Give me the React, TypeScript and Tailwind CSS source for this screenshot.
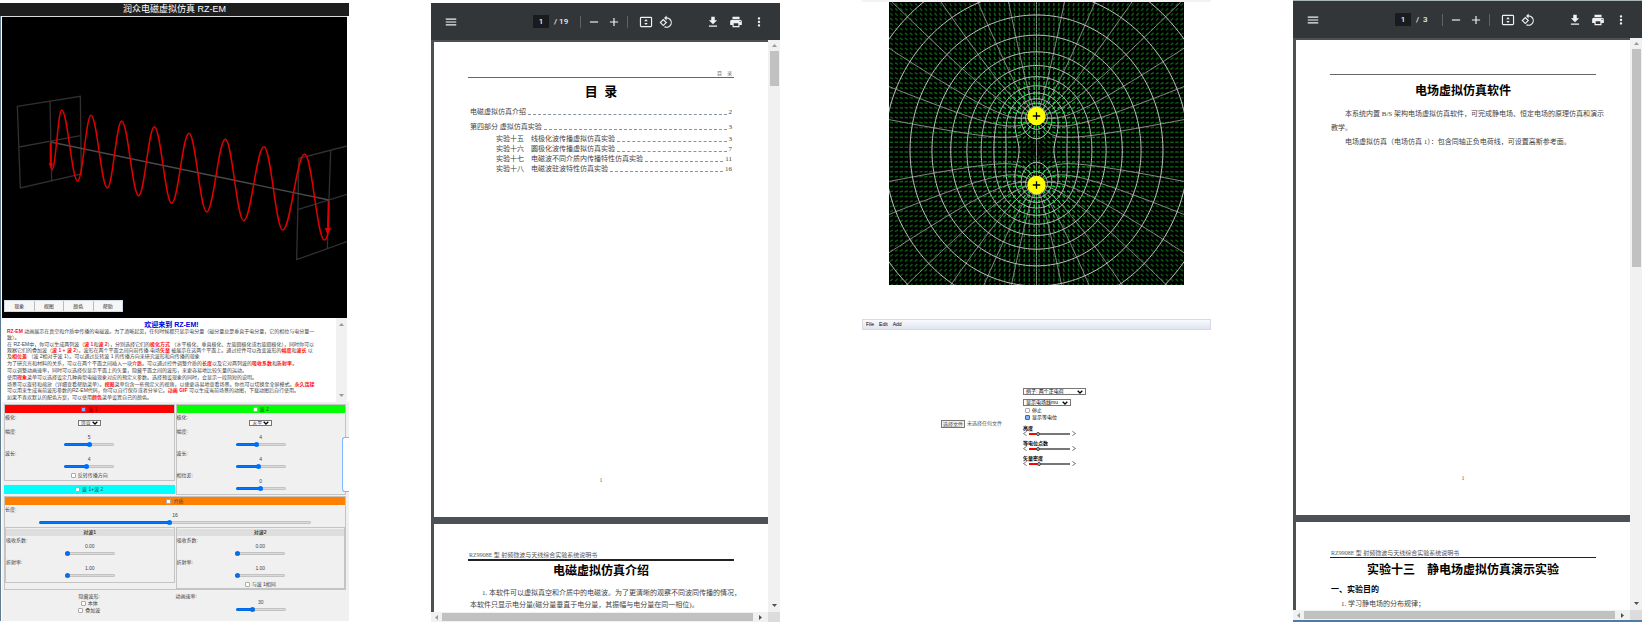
import { Fragment, useId } from "react";
import type { ReactNode } from "react";
import clsx from "clsx";
import {
  MdAdd,
  MdMenu,
  MdMoreVert,
  MdPrint,
  MdRemove,
  MdRotate90DegreesCcw,
} from "react-icons/md";

type Segment = string | { mark: string };

const introLines: Segment[][][] = [
  [
    [{ mark: "RZ-EM" }, " 动画展示在真空和介质中传播的电磁波。为了清晰起见，任何时候都只显示电分量（磁分量总是垂直于电分量，它的相位与电分量一"],
    ["致）。"],
  ],
  [
    ["在 RZ-EM中，你可以生成两列波（", { mark: "波 1" }, "和", { mark: "波 2" }, "），分别选择它们的", { mark: "极化方式" }, " （水平极化、垂直极化、左旋圆极化或右旋圆极化），同时你可以"],
    ["观察它们的叠加波（", { mark: "波 1 + 波 2" }, "）。波形在两个平面之间向前传播.电场", { mark: "矢量" }, " 被展示在这两个平面上。通过控件可以改变波形的", { mark: "幅度" }, "和", { mark: "波长" }, " 以"],
    ["及", { mark: "相位差" }, " （波 2相对于波 1）。可以通过反转波 1 的传播方向来研究波形和向传播的现象"],
  ],
  [
    ["为了研究光和材料的关系，可以在两个平面之间插入一块", { mark: "介质" }, "。可以通过控件调整介质的", { mark: "长度" }, "以及它对两列波的", { mark: "吸收系数" }, "和", { mark: "折射率" }, "。"],
  ],
  [["可以调整动画速率，同时可以选择仅显示平面上的矢量，隐藏平面之间的波形，来更容易地比较矢量的运动。"]],
  [["使用", { mark: "现象" }, "菜单可以选择设定几种典型电磁现象对应的预定义参数。选择预设现象的同时，会显示一段简短的说明。"]],
  [
    ["场景可以旋转和缩放（详细查看帮助菜单）。", { mark: "视图" }, "菜单包含一些预定义的视角，以便更容易地查看场景。你也可以切换至全屏模式。", { mark: "永久连接" }],
    ["可以用来生成当前波形参数的RZ-EM代码，你可以自行保存或者分享它。", { mark: "动画 GIF" }, " 可以生成当前场景的动图，下载动图后自行使用。"],
  ],
  [["如果不喜欢默认的配色方案，可以使用", { mark: "颜色" }, "菜单设置自己的颜色。"]],
];

/* Turning points of the travelling wave, from the left plane to the right one. */
const wavePoints = [
  [156, 510], [185, 330], [233, 543], [273, 346], [322, 564], [365, 363],
  [416, 587], [463, 380], [515, 610], [567, 400], [620, 636], [676, 418],
  [731, 662], [792, 440], [848, 690], [914, 462], [973, 720],
];

function wavePath() {
  let d = `M${wavePoints[0][0]} ${wavePoints[0][1]}`;
  for (let i = 1; i < wavePoints.length; i++) {
    const [x0, y0] = wavePoints[i - 1];
    const [x1, y1] = wavePoints[i];
    const k = (x1 - x0) * 0.37;
    d += `C${x0 + k} ${y0} ${x1 - k} ${y1} ${x1} ${y1}`;
  }
  return `${d}Q980 720 984 698`;
}

function WaveScene() {
  return (
    <svg viewBox="6 51 1035 903" className="block w-full bg-black" fill="none">
      <g stroke="#303030" strokeWidth="4">
        <path d="M52 319L241 289L244 522L61 564ZM150 304L155 543M57 441L242 407" />
        <path d="M1041 438L897 475L890 779L1041 725M893 629L1041 583M992 453L982 745" />
        <path d="M152 426L987 600" stroke="#4a4a4a" />
      </g>
      <path d={wavePath()} stroke="#e00000" strokeWidth="4.5" />
      <path d="M152 428V494M986 603L984 688" stroke="#e00000" strokeWidth="6" />
      <path d="M146 490H159L154 510ZM974 684H993L983 704Z" fill="#e00000" />
    </svg>
  );
}

type SliderProps = {
  label: string;
  value: string;
  percent: number;
  wide?: boolean;
};

function Slider({ label, value, percent, wide }: SliderProps) {
  const id = useId();

  return (
    <div className="flex h-[22px] flex-col">
      <label htmlFor={id} className="leading-[6px]">
        {label}:
      </label>
      <output htmlFor={id} className="text-center leading-[6px]">
        {value}
      </output>
      <div className="flex h-2 items-center justify-center">
        <input
          id={id}
          type="range"
          min={0}
          max={100}
          defaultValue={percent}
          className={clsx(
            "h-[3px] appearance-none rounded-full bg-[#dadada] outline-1 -outline-offset-1 outline-black/10 [&::-webkit-slider-thumb]:size-[5px] [&::-webkit-slider-thumb]:appearance-none [&::-webkit-slider-thumb]:rounded-full [&::-webkit-slider-thumb]:bg-[#0075ff]",
            wide ? "w-4/5" : "w-[50px]",
          )}
          style={{
            backgroundImage: `linear-gradient(to right, #0075ff ${percent}%, transparent ${percent}%)`,
          }}
        />
      </div>
    </div>
  );
}

function Check({ label, checked }: { label: string; checked?: boolean }) {
  return (
    <label className="flex items-center justify-center gap-[2px]">
      <input
        type="checkbox"
        defaultChecked={checked}
        className="size-[5px] shrink-0 appearance-none rounded-[1px] border border-[#aaa] bg-white checked:border-[#0075ff] checked:bg-[#7ab6ff]"
      />
      {label}
    </label>
  );
}

function Select({ label, options, className }: { label: string; options: string[]; className?: string }) {
  return (
    <div className={clsx("relative", className)}>
      <select
        aria-label={label}
        className="block h-full w-full appearance-none border border-[#777] bg-white pl-[2px] leading-none"
      >
        {options.map((option) => (
          <option key={option}>{option}</option>
        ))}
      </select>
      <svg
        viewBox="0 0 6 4"
        className="pointer-events-none absolute inset-y-0 right-[3px] my-auto w-[6px]"
        fill="none"
        stroke="#000"
        strokeWidth="1.3"
      >
        <path d="M.7 .7L3 3L5.3 .7" />
      </svg>
    </div>
  );
}

function Polarisation({ value }: { value: string }) {
  return (
    <div className="flex h-[14px] flex-col">
      <span className="leading-[6px]">极化:</span>
      <Select label="极化" options={[value]} className="mx-auto h-[6px] w-[23px]" />
    </div>
  );
}

function Bar({ className, children }: { className: string; children: ReactNode }) {
  return <div className={clsx("flex items-center justify-center leading-none", className)}>{children}</div>;
}

function WavePanel() {
  return (
    <section className="relative bg-[#f0f0f0] pt-[2px] pr-[3px] pb-[6px] pl-[2px] text-[5px] text-[#444]">
      <div className="grid grid-cols-2 items-start gap-x-px">
        <div>
          <div className="border border-[#c4c4c4] pb-[2px]">
            <Bar className="mb-px h-2 bg-[#ff0000] text-[#5a0000]">
              <Check label="波 1" checked />
            </Bar>
            <Polarisation value="竖直" />
            <Slider label="幅度" value="5" percent={50} />
            <Slider label="波长" value="4" percent={44} />
            <div className="leading-[6px]">
              <Check label="反转传播方向" />
            </div>
          </div>
          <Bar className="mt-[4px] h-[9px] bg-[#00ffff]">
            <Check label="波 1+波 2" />
          </Bar>
        </div>
        <div className="h-[91px] border border-[#c4c4c4]">
          <Bar className="mb-px h-2 bg-[#00ff00] text-[#005a00]">
            <Check label="波 2" />
          </Bar>
          <Polarisation value="水平" />
          <Slider label="幅度" value="4" percent={41} />
          <Slider label="波长" value="4" percent={44} />
          <Slider label="相位差" value="0" percent={50} />
        </div>
      </div>

      <div className="mt-px border border-[#c4c4c4]">
        <Bar className="mb-px h-2 bg-[#ff8000]">
          <Check label="介质" />
        </Bar>
        <Slider label="长度" value="16" percent={48} wide />
        <div className="-mt-px grid grid-cols-2 items-start gap-x-px">
          {["对波1", "对波2"].map((title, index) => (
            <div key={title} className="border border-[#c4c4c4] pt-px pb-px">
              <Bar className="mb-px h-[7px] bg-[#dedede] font-bold">{title}</Bar>
              <Slider label="吸收系数" value="0.00" percent={0} />
              <Slider label="折射率" value="1.00" percent={0} />
              {index === 1 && (
                <div className="leading-[6px]">
                  <Check label="与波 1相同" />
                </div>
              )}
            </div>
          ))}
        </div>
      </div>

      <div className="mt-[3px] grid grid-cols-2 gap-x-px">
        <fieldset className="text-center leading-[7px]">
          <div>隐藏波形:</div>
          <Check label="本体" />
          <Check label="叠加波" />
        </fieldset>
        <Slider label="动画速率" value="30" percent={32} />
      </div>

      <div className="absolute top-[35px] right-0 h-[55px] w-[7px] rounded-l-[3px] border border-r-0 border-[#7fb8ff] bg-white" />
    </section>
  );
}

function WaveSimulator() {
  return (
    <section className="pt-[3px] font-['Liberation_Sans','Noto_Sans_CJK_SC',sans-serif]">
      <h1 className="h-[13px] bg-[#1e1e1e] text-center text-[9px] leading-[13px] text-white">
        润众电磁虚拟仿真 RZ-EM
      </h1>
      <div className="border-l border-[#5f7d92] pl-px">
        <div className="relative mr-[2px] border-t border-[#ddd]">
          <WaveScene />
          <nav className="absolute bottom-[6px] left-[2px] flex w-[119px] divide-x divide-[#bbb] border border-[#cfdbe6] bg-[#f6f6f6] text-[5px] text-[#333]">
            {["现象", "视图", "颜色", "帮助"].map((item) => (
              <button key={item} type="button" className="h-[10px] flex-1 leading-none">
                {item}
              </button>
            ))}
          </nav>
        </div>
        <div className="mr-[2px] flex h-[84px] overflow-hidden">
          <div className="min-w-0 flex-1 overflow-hidden pt-[3px] pl-[5px] whitespace-nowrap">
            <h2 className="text-center text-[7px] leading-[7px] font-bold text-[#0000e0]">欢迎来到 RZ-EM!</h2>
            <div className="flex flex-col gap-px text-[5px] leading-[6px] text-[#444]">
              {introLines.map((lines, index) => (
                <p key={index}>
                  {lines.map((segments, row) => (
                    <Fragment key={row}>
                      {row > 0 && <br />}
                      {segments.map((segment, part) =>
                        typeof segment === "string" ? (
                          segment
                        ) : (
                          <b key={part} className="text-[#ff1010]">
                            {segment.mark}
                          </b>
                        ),
                      )}
                    </Fragment>
                  ))}
                </p>
              ))}
            </div>
          </div>
          <div className="flex w-[11px] flex-col items-center justify-between bg-[#f1f1f1] py-1 text-[#999]">
            <Arrow direction="up" />
            <Arrow direction="down" />
          </div>
        </div>
        <WavePanel />
      </div>
    </section>
  );
}

function Arrow({ direction }: { direction: "up" | "down" | "left" | "right" }) {
  const shapes = {
    up: "M0 4L2.5 1L5 4Z",
    down: "M0 1L2.5 4L5 1Z",
    left: "M4 0L1 2.5L4 5Z",
    right: "M1 0L4 2.5L1 5Z",
  };

  return (
    <svg viewBox="0 0 5 5" className="size-[5px] shrink-0" fill="currentColor">
      <path d={shapes[direction]} />
    </svg>
  );
}

function PdfToolbar({ pages }: { pages: number }) {
  const iconButton = "size-[14px] shrink-0";

  return (
    <header className="flex h-[37px] items-center bg-[#323639] pr-[14px] pl-[13px] font-[Roboto,sans-serif] text-[8px] text-[#f1f1f1]">
      <button type="button" aria-label="菜单" className={iconButton}>
        <MdMenu className="size-full" stroke="currentColor" />
      </button>
      <input
        aria-label="页码"
        defaultValue="1"
        className="ml-[75px] h-[13px] w-4 bg-[#191b1c] text-center font-medium"
      />
      <span className="w-[26px] pl-[5px] font-medium whitespace-pre">{pages < 10 ? `/  ${pages}` : `/ ${pages}`}</span>
      <span className="ml-[5px] h-3 w-px bg-[#5f6366]" />
      <button type="button" aria-label="缩小" className={clsx(iconButton, "ml-[6px]")}>
        <MdRemove className="size-full" stroke="currentColor" />
      </button>
      <button type="button" aria-label="放大" className={clsx(iconButton, "ml-[6px]")}>
        <MdAdd className="size-full" stroke="currentColor" />
      </button>
      <span className="ml-[6px] h-3 w-px bg-[#5f6366]" />
      <button type="button" aria-label="适合页面" className={clsx(iconButton, "ml-[11px]")}>
        <svg viewBox="0 0 24 24" className="size-full" fill="none" stroke="currentColor" strokeWidth="2">
          <rect x="2.5" y="4" width="19" height="16" rx="1.5" />
          <path d="M9 10.5L12 7L15 10.5ZM9 13.5L12 17L15 13.5Z" fill="currentColor" stroke="none" />
        </svg>
      </button>
      <button type="button" aria-label="旋转" className={clsx(iconButton, "ml-[6px]")}>
        <MdRotate90DegreesCcw className="size-full" />
      </button>
      <div className="ml-auto flex gap-[9px]">
        <button type="button" aria-label="下载" className={iconButton}>
          <svg viewBox="0 0 24 24" className="size-full" fill="currentColor">
            <path d="M19 9h-4V3H9v6H5l7 7 7-7zM5 18v2h14v-2H5z" />
          </svg>
        </button>
        <button type="button" aria-label="打印" className={iconButton}>
          <MdPrint className="size-full" />
        </button>
        <button type="button" aria-label="更多" className={iconButton}>
          <MdMoreVert className="size-full" />
        </button>
      </div>
    </header>
  );
}

type PdfViewerProps = {
  pages: number;
  thumbClass: string;
  first: ReactNode;
  second: ReactNode;
};

function PdfViewer({ pages, thumbClass, first, second }: PdfViewerProps) {
  return (
    <section className="font-['Liberation_Serif','Noto_Sans_CJK_SC',serif]">
      <PdfToolbar pages={pages} />
      <div className="flex bg-[#4c5154]">
        <div className="flex min-w-0 flex-1 flex-col gap-[7px] pt-[2px] pl-[3px]">
          <article className="flex h-[475px] flex-col overflow-hidden bg-white px-[34px] whitespace-nowrap">
            {first}
            <div className="mt-auto pb-8 text-center text-[6px] leading-[10px] text-[#7a5a48]">1</div>
          </article>
          <article className="h-[88px] overflow-hidden bg-white px-[34px] whitespace-nowrap">
            {second}
          </article>
        </div>
        <div className="flex w-3 flex-col items-center bg-[#f1f1f1] text-[#505050]">
          <div className="flex h-[11px] items-center text-[#999]">
            <Arrow direction="up" />
          </div>
          <div className={clsx("w-[9px] bg-[#c1c1c1]", thumbClass)} />
          <div className="mt-auto pb-1">
            <Arrow direction="down" />
          </div>
        </div>
      </div>
      <div className="flex h-[10px] items-center bg-[#f1f1f1] text-[#505050]">
        <div className="flex w-[11px] justify-center text-[#999]">
          <Arrow direction="left" />
        </div>
        <div className="h-2 flex-1 bg-[#c1c1c1]" />
        <div className="flex w-[15px] justify-center">
          <Arrow direction="right" />
        </div>
        <div className="h-full w-3 bg-[#dcdcdc]" />
      </div>
    </section>
  );
}

const chapters = [
  { title: "电磁虚拟仿真介绍", page: 2 },
  { title: "第四部分 虚拟仿真实验", page: 3 },
];

const experiments = [
  { title: "实验十五　线极化波传播虚拟仿真实验", page: 3 },
  { title: "实验十六　圆极化波传播虚拟仿真实验", page: 7 },
  { title: "实验十七　电磁波不同介质内传播特性仿真实验", page: 11 },
  { title: "实验十八　电磁波驻波特性仿真实验", page: 16 },
];

function ContentsRow({ title, page }: { title: string; page: number }) {
  return (
    <li className="flex items-center">
      {title}
      <span className="mx-[2px] mt-1 flex-1 border-b border-dashed border-[#8a93a3]" />
      {page}
    </li>
  );
}

function ContentsPage() {
  return (
    <>
      <div className="pt-7 pr-[2px] text-right text-[5px] leading-[7px] text-[#666]">目　录</div>
      <hr className="border-[#666]" />
      <h2 className="mt-[5px] text-center text-[13px] leading-[18px] font-bold whitespace-pre text-black">目  录</h2>
      <div className="mt-[6px] px-[2px] text-[7px] leading-[10px] text-[#444]">
        <ol className="flex flex-col gap-[5px]">
          {chapters.map((entry) => (
            <ContentsRow key={entry.title} {...entry} />
          ))}
        </ol>
        <ol className="mt-[2px] pl-[26px]">
          {experiments.map((entry) => (
            <ContentsRow key={entry.title} {...entry} />
          ))}
        </ol>
      </div>
    </>
  );
}

function RunningHead({ thick }: { thick?: boolean }) {
  return (
    <>
      <div className="pt-[27px] pl-px text-[6px] leading-[8px] text-[#555]">
        RZ9908E 型 射频微波与天线综合实验系统说明书
      </div>
      <hr className={clsx("border-[#222]", thick && "border-t-2")} />
    </>
  );
}

function IntroPage() {
  return (
    <>
      <RunningHead thick />
      <h2 className="mt-[2px] text-center text-[12px] leading-4 font-bold text-black">电磁虚拟仿真介绍</h2>
      <p className="mt-2 pl-[2px] text-[7px] leading-[12px] text-[#444]">
        <span className="pl-3">1. 本软件可以虚拟真空和介质中的电磁波。为了更清晰的观察不同波同传播的情况，</span>
        <br />
        本软件只显示电分量(磁分量垂直于电分量，其振幅与电分量在同一相位)。
      </p>
    </>
  );
}

function SoftwarePage() {
  return (
    <>
      <hr className="mt-[34px] border-[#666]" />
      <h2 className="mt-[7px] text-center text-[12px] leading-[18px] font-bold text-black">电场虚拟仿真软件</h2>
      <div className="mt-[7px] pl-px text-[7px] leading-[14px] text-[#444]">
        <p className="indent-[14px]">
          本系统内置 B/S 架构电场虚拟仿真软件，可完成静电场、恒定电场的原理仿真和演示
          <br />
          教学。
        </p>
        <p className="indent-[14px]">电场虚拟仿真（电场仿真 1）：包含同轴正负电荷线，可设置高斯参考面。</p>
      </div>
    </>
  );
}

function ExperimentPage() {
  return (
    <>
      <RunningHead />
      <h2 className="mt-1 text-center text-[12px] leading-4 font-bold text-black">
        实验十三　静电场虚拟仿真演示实验
      </h2>
      <h3 className="mt-[5px] pl-px text-[8px] leading-[14px] font-bold text-black">一、实验目的</h3>
      <p className="pl-[11px] text-[7px] leading-[14px] text-[#444]">1. 学习静电场的分布规律；</p>
    </>
  );
}

/* Two equal line charges at (0, ±A). With z measured along their axis,
   z² - A² = c·e^(iψ): constant c is an equipotential, constant ψ a field line. */
const A = 34.5;

function rootPoint(c: number, psi: number) {
  const re = A * A + c * Math.cos(psi);
  const im = c * Math.sin(psi);
  const r = Math.sqrt(Math.hypot(re, im));
  const t = Math.atan2(im, re) / 2;
  return [r * Math.cos(t), r * Math.sin(t)];
}

function mirroredPath(points: number[][]) {
  return [1, -1]
    .map((s) => "M" + points.map(([u, v]) => `${(s * v).toFixed(2)} ${(-s * u).toFixed(2)}`).join("L"))
    .join("");
}

const equipotentials = Array.from({ length: 14 }, (_, k) => {
  const c = 370 * Math.pow(1.4175, k);
  return mirroredPath(
    Array.from({ length: 121 }, (_, i) => rootPoint(c, -Math.PI + 0.0001 + (i / 120) * (2 * Math.PI - 0.0002))),
  );
});

const fieldLines = Array.from({ length: 16 }, (_, k) => {
  const psi = -Math.PI + (k * Math.PI) / 8;
  const limit = k === 0 ? A * A : 52000;
  return mirroredPath(
    Array.from({ length: 80 }, (_, i) => rootPoint(limit * Math.pow(i / 79, 2.5), psi)),
  );
});

const vectors = Array.from({ length: 60 * 58 }, (_, n) => {
  const x = -145 + (n % 60) * 4.92;
  const y = -146 + Math.floor(n / 60) * 4.92;
  const up = x * x + (y + A) * (y + A) + 0.1;
  const down = x * x + (y - A) * (y - A) + 0.1;
  const ex = x / up + x / down;
  const ey = (y + A) / up + (y - A) / down;
  const size = Math.hypot(ex, ey) || 1;
  const ux = (ex / size) * 1.7;
  const uy = (ey / size) * 1.7;
  const level = Math.min(1, 0.18 + size * 16) * Math.min(1, size * 110);
  return { x1: x - ux, y1: y - uy, x2: x + ux, y2: y + uy, level };
});

function FieldScene() {
  return (
    <svg viewBox="-147.5 -148.5 295 283" className="mx-auto block w-[295px] bg-black" fill="none">
      {vectors.map((v, i) => (
        <line
          key={i}
          x1={v.x1}
          y1={v.y1}
          x2={v.x2}
          y2={v.y2}
          stroke={`rgb(${Math.round(50 * v.level * (1 - v.level))} ${Math.round(235 * v.level)} ${Math.round(50 * v.level)})`}
          strokeWidth="1.5"
        />
      ))}
      <path d={fieldLines.join("")} stroke="#9a929a" strokeWidth="0.9" />
      <path d={equipotentials.join("")} stroke="#c0c0c0" strokeWidth="1" />
      {[-A, A].map((y) => (
        <g key={y}>
          <circle cy={y} r="9.2" fill="#ffff00" />
          <path d={`M-3.7 ${y}H3.7M0 ${y - 3.7}V${y + 3.7}`} stroke="#000" strokeWidth="1.3" />
        </g>
      ))}
    </svg>
  );
}

function FieldSlider({ label, percent }: { label: string; percent: number }) {
  const id = useId();

  return (
    <div className="mb-1">
      <label htmlFor={id} className="block leading-[6px] font-bold">
        {label}
      </label>
      <div className="flex h-[5px] items-center gap-[2px] text-[#444]">
        <button type="button" aria-label={`${label} -`}>
          <svg viewBox="0 0 4 5" className="h-[5px] w-1" fill="none" stroke="currentColor" strokeWidth="0.7">
            <path d="M3.7 .3L.5 2.5L3.7 4.7" />
          </svg>
        </button>
        <input
          id={id}
          type="range"
          defaultValue={percent}
          className="h-[2px] w-[41px] appearance-none bg-[#777] [&::-webkit-slider-thumb]:size-[4px] [&::-webkit-slider-thumb]:appearance-none [&::-webkit-slider-thumb]:rounded-full [&::-webkit-slider-thumb]:border [&::-webkit-slider-thumb]:border-[#444] [&::-webkit-slider-thumb]:bg-[#bbb]"
          style={{ backgroundImage: `linear-gradient(to right, #ff0000 ${percent}%, transparent ${percent}%)` }}
        />
        <button type="button" aria-label={`${label} +`}>
          <svg viewBox="0 0 4 5" className="h-[5px] w-1" fill="none" stroke="currentColor" strokeWidth="0.7">
            <path d="M.3 .3L3.5 2.5L.3 4.7" />
          </svg>
        </button>
      </div>
    </div>
  );
}

function FieldSimulator() {
  return (
    <section className="border-t-2 border-[#f3f3f3] font-['Liberation_Sans','Noto_Sans_CJK_SC',sans-serif] text-[5px] text-black">
      <FieldScene />
      <nav className="mt-[34px] flex h-[11px] items-center gap-[5px] border border-[#d5dae3] bg-linear-to-b from-[#f8faff] to-[#dfe4ef] px-[3px] leading-none">
        <button type="button">File</button>
        <button type="button">Edit</button>
        <button type="button">Add</button>
      </nav>
      <div className="flex pt-[58px] pl-[79px]">
        <label className="mt-8 flex h-2 w-[82px] items-center gap-[2px] whitespace-nowrap text-[#555]">
          <input type="file" className="sr-only" />
          <span className="border border-[#777] bg-[#efefef] px-px leading-[6px]">选择文件</span>
          未选择任何文件
        </label>
        <form>
          <Select label="例子" options={["例子: 两个正电荷"]} className="h-[7px] w-[63px]" />
          <Select label="显示" options={["显示电场线mu"]} className="mt-1 mb-px h-[7px] w-12" />
          <div className="flex flex-col items-start pl-[2px] leading-[7px]">
            <Check label="停止" />
            <Check label="显示等电位" checked />
          </div>
          <div className="mt-1">
            <FieldSlider label="亮度" percent={18} />
            <FieldSlider label="等电位点数" percent={18} />
            <FieldSlider label="矢量密度" percent={22} />
          </div>
        </form>
      </div>
    </section>
  );
}

export default function App() {
  return (
    <main className="grid grid-cols-4 items-start gap-x-[82px] overflow-hidden bg-white">
      <WaveSimulator />
      <div className="pt-[3px]">
        <PdfViewer pages={19} thumbClass="h-[35px]" first={<ContentsPage />} second={<IntroPage />} />
      </div>
      <FieldSimulator />
      <div className="border-t border-b-2 border-t-[#a9b5b1] border-b-[#4f7ba6]">
        <PdfViewer pages={3} thumbClass="h-[218px]" first={<SoftwarePage />} second={<ExperimentPage />} />
      </div>
    </main>
  );
}
